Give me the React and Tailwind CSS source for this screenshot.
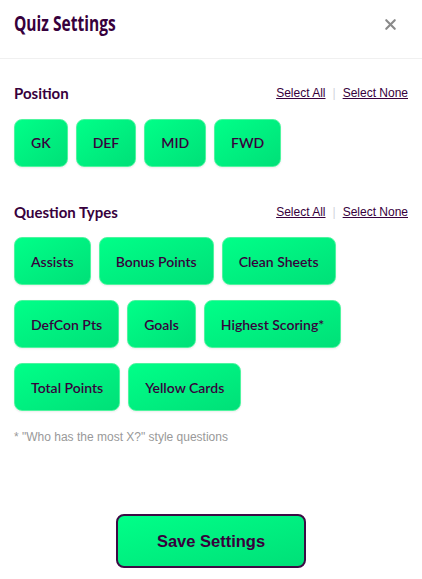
import { X } from "lucide-react";

const positions = ["GK", "DEF", "MID", "FWD"];
const questionTypes = [
  "Assists",
  "Bonus Points",
  "Clean Sheets",
  "DefCon Pts",
  "Goals",
  "Highest Scoring*",
  "Total Points",
  "Yellow Cards",
];

function Chip({ label }) {
  return (
    <button className="h-[48px] px-[16px] rounded-lg border border-[#4ef59f] bg-gradient-to-br from-[#00ff88] to-[#00e078] text-[14px] font-semibold text-[#37003c] font-['Lato',sans-serif] shadow-[0_1px_2px_rgba(0,0,0,0.08)]">
      {label}
    </button>
  );
}

function SectionHeader({ title }) {
  return (
    <div className="flex items-center justify-between">
      <h3 className="text-[15px] font-bold text-[#37003c] font-['Lato',sans-serif]">{title}</h3>
      <div className="flex items-center gap-[7px] text-[12px] text-[#37003c] font-['Liberation_Sans',Arial,sans-serif]">
        <span className="underline">Select All</span>
        <span className="text-gray-300">|</span>
        <span className="underline">Select None</span>
      </div>
    </div>
  );
}

export default function App() {
  return (
    <div className="w-[422px] h-[579px] bg-white flex flex-col">
      {/* Header */}
      <div className="h-[59px] flex items-center justify-between pl-[14px] pr-[23px] border-b border-[#f0f0f0]">
        <h2 className="inline-block origin-left scale-x-[0.74] text-[21px] font-bold text-[#37003c] font-['Open_Sans',sans-serif] -mt-[10px] whitespace-nowrap">
          Quiz Settings
        </h2>
        <X size={17} strokeWidth={3} className="text-[#8a8a8a] -mt-[10px]" />
      </div>

      <div className="px-[14px] pt-[23px]">
        <SectionHeader title="Position" />
        <div className="flex gap-2 mt-[14px]">
          {positions.map((p) => (
            <Chip key={p} label={p} />
          ))}
        </div>

        <div className="mt-[34px]">
          <SectionHeader title="Question Types" />
        </div>
        <div className="flex flex-wrap gap-x-2 gap-y-[15px] mt-[14px]">
          {questionTypes.map((q) => (
            <Chip key={q} label={q} />
          ))}
        </div>

        <p className="mt-[17px] text-[12px] text-[#999] font-['Liberation_Sans',Arial,sans-serif]">
          * "Who has the most X?" style questions
        </p>
      </div>

      <div className="flex-1 flex items-end justify-center pb-[11px]">
        <button className="w-[190px] h-[54px] rounded-lg border-2 border-[#3d0a44] bg-gradient-to-br from-[#00ff88] to-[#00e078] text-[16.5px] font-bold text-[#37003c] font-['Liberation_Sans',Arial,sans-serif]">
          Save Settings
        </button>
      </div>
    </div>
  );
}
